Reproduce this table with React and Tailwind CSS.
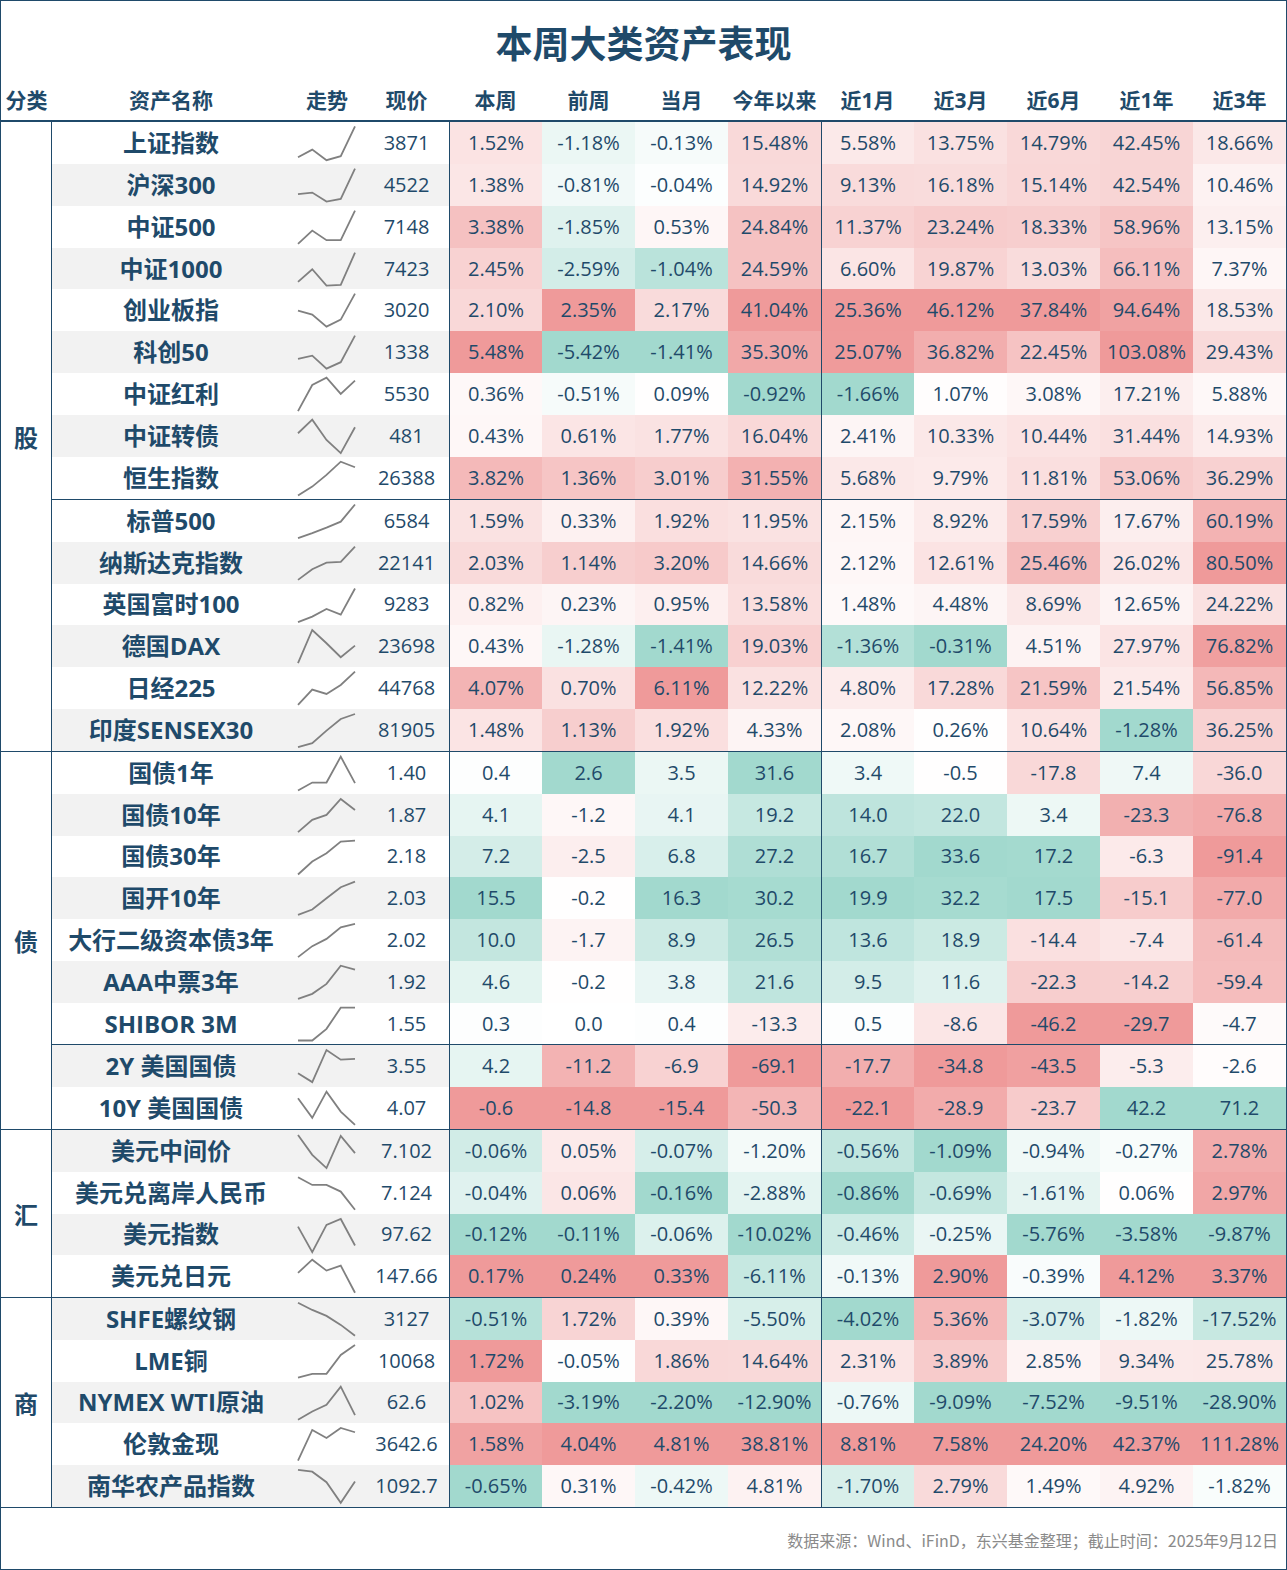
import React from "react";

const NAVY = "#1f4a6a";
const RED = [239, 154, 154];
const GREEN = [162, 217, 206];

const groups = [
  {
    cat: "股",
    invert: false,
    pct: true,
    h: "h-[630px]",
    subs: [
      {
        grow: "flex-[9]",
        first: true,
        rows: [
          ["上证指数", "3871", ["1.52", "-1.18", "-0.13", "15.48", "5.58", "13.75", "14.79", "42.45", "18.66"], [35.3, 27.7, 38.3, 34.3, 4.5], false],
          ["沪深300", "4522", ["1.38", "-0.81", "-0.04", "14.92", "9.13", "16.18", "15.14", "42.54", "10.46"], [30.3, 28.7, 37.7, 35, 4.7], true],
          ["中证500", "7148", ["3.38", "-1.85", "0.53", "24.84", "11.37", "23.24", "18.33", "58.96", "13.15"], [38, 24.7, 34.3, 34.3, 4.7], false],
          ["中证1000", "7423", ["2.45", "-2.59", "-1.04", "24.59", "6.60", "19.87", "13.03", "66.11", "7.37"], [34, 21.3, 37.7, 37, 4.7], true],
          ["创业板指", "3020", ["2.10", "2.35", "2.17", "41.04", "25.36", "46.12", "37.84", "94.64", "18.53"], [21.7, 25.7, 37.7, 30.7, 4.7], false],
          ["科创50", "1338", ["5.48", "-5.42", "-1.41", "35.30", "25.07", "36.82", "22.45", "103.08", "29.43"], [28, 24.7, 37.7, 31.3, 4.7], true],
          ["中证红利", "5530", ["0.36", "-0.51", "0.09", "-0.92", "-1.66", "1.07", "3.08", "17.21", "5.88"], [38.3, 12, 4.7, 21, 7.7], false],
          ["中证转债", "481", ["0.43", "0.61", "1.77", "16.04", "2.41", "10.33", "10.44", "31.44", "14.93"], [18.3, 4.7, 25, 38.3, 12.3], true],
          ["恒生指数", "26388", ["3.82", "1.36", "3.01", "31.55", "5.68", "9.79", "11.81", "53.06", "36.29"], [38.7, 29.7, 18, 4.7, 10.3], false],
        ],
      },
      {
        grow: "flex-[6]",
        first: false,
        rows: [
          ["标普500", "6584", ["1.59", "0.33", "1.92", "11.95", "2.15", "8.92", "17.59", "17.67", "60.19"], [38.3, 33.3, 27.7, 21.7, 4.5], false],
          ["纳斯达克指数", "22141", ["2.03", "1.14", "3.20", "14.66", "2.12", "12.61", "25.46", "26.02", "80.50"], [38, 27.3, 20.7, 20, 4.7], true],
          ["英国富时100", "9283", ["0.82", "0.23", "0.95", "13.58", "1.48", "4.48", "8.69", "12.65", "24.22"], [38.3, 32.7, 25, 30.7, 4.5], false],
          ["德国DAX", "23698", ["0.43", "-1.28", "-1.41", "19.03", "-1.36", "-0.31", "4.51", "27.97", "76.82"], [38.3, 5, 18.3, 32.3, 20.7], true],
          ["日经225", "44768", ["4.07", "0.70", "6.11", "12.22", "4.80", "17.28", "21.59", "21.54", "56.85"], [38, 22.7, 27, 18, 4.7], false],
          ["印度SENSEX30", "81905", ["1.48", "1.13", "1.92", "4.33", "2.08", "0.26", "10.64", "-1.28", "36.25"], [38.3, 34.3, 21.7, 10, 5], true],
        ],
      },
    ],
  },
  {
    cat: "债",
    invert: true,
    pct: false,
    h: "h-[378px]",
    subs: [
      {
        grow: "flex-[7]",
        first: true,
        rows: [
          ["国债1年", "1.40", ["0.4", "2.6", "3.5", "31.6", "3.4", "-0.5", "-17.8", "7.4", "-36.0"], [38.7, 30.7, 30.7, 4.7, 31.3], false],
          ["国债10年", "1.87", ["4.1", "-1.2", "4.1", "19.2", "14.0", "22.0", "3.4", "-23.3", "-76.8"], [38.3, 26, 21, 5, 16], true],
          ["国债30年", "2.18", ["7.2", "-2.5", "6.8", "27.2", "16.7", "33.6", "17.2", "-6.3", "-91.4"], [38.7, 25.7, 17.3, 5.7, 4.7], false],
          ["国开10年", "2.03", ["15.5", "-0.2", "16.3", "30.2", "19.9", "32.2", "17.5", "-15.1", "-77.0"], [38, 32.7, 21.3, 10.3, 4.7], true],
          ["大行二级资本债3年", "2.02", ["10.0", "-1.7", "8.9", "26.5", "13.6", "18.9", "-14.4", "-7.4", "-61.4"], [38.3, 27.3, 20, 8.3, 5], false],
          ["AAA中票3年", "1.92", ["4.6", "-0.2", "3.8", "21.6", "9.5", "11.6", "-22.3", "-14.2", "-59.4"], [38, 33, 23, 4.7, 8.7], true],
          ["SHIBOR 3M", "1.55", ["0.3", "0.0", "0.4", "-13.3", "0.5", "-8.6", "-46.2", "-29.7", "-4.7"], [37.7, 37.7, 26, 4.7, 4.7], false],
        ],
      },
      {
        grow: "flex-[2]",
        first: false,
        rows: [
          ["2Y 美国国债", "3.55", ["4.2", "-11.2", "-6.9", "-69.1", "-17.7", "-34.8", "-43.5", "-5.3", "-2.6"], [28.3, 37.3, 5, 14.7, 14], true],
          ["10Y 美国国债", "4.07", ["-0.6", "-14.8", "-15.4", "-50.3", "-22.1", "-28.9", "-23.7", "42.2", "71.2"], [11.3, 31, 4.7, 24.7, 38], false],
        ],
      },
    ],
  },
  {
    cat: "汇",
    invert: false,
    pct: true,
    h: "h-[168px]",
    subs: [
      {
        grow: "flex-[4]",
        first: true,
        rows: [
          ["美元中间价", "7.102", ["-0.06", "0.05", "-0.07", "-1.20", "-0.56", "-1.09", "-0.94", "-0.27", "2.78"], [5, 25, 38.3, 6, 23.3], true],
          ["美元兑离岸人民币", "7.124", ["-0.04", "0.06", "-0.16", "-2.88", "-0.86", "-0.69", "-1.61", "0.06", "2.97"], [5.3, 13, 13, 19.7, 38], false],
          ["美元指数", "97.62", ["-0.12", "-0.11", "-0.06", "-10.02", "-0.46", "-0.25", "-5.76", "-3.58", "-9.87"], [12.7, 38.3, 11, 5, 31.7], true],
          ["美元兑日元", "147.66", ["0.17", "0.24", "0.33", "-6.11", "-0.13", "2.90", "-0.39", "4.12", "3.37"], [18, 4.7, 15.7, 10.7, 38], false],
        ],
      },
    ],
  },
  {
    cat: "商",
    invert: false,
    pct: true,
    h: "h-[210px]",
    subs: [
      {
        grow: "flex-[5]",
        first: true,
        rows: [
          ["SHFE螺纹钢", "3127", ["-0.51", "1.72", "0.39", "-5.50", "-4.02", "5.36", "-3.07", "-1.82", "-17.52"], [4.7, 12, 18, 27, 38], true],
          ["LME铜", "10068", ["1.72", "-0.05", "1.86", "14.64", "2.31", "3.89", "2.85", "9.34", "25.78"], [37.7, 34, 34, 15, 5], false],
          ["NYMEX WTI原油", "62.6", ["1.02", "-3.19", "-2.20", "-12.90", "-0.76", "-9.09", "-7.52", "-9.51", "-28.90"], [38, 29.7, 23, 4.7, 33.3], true],
          ["伦敦金现", "3642.6", ["1.58", "4.04", "4.81", "38.81", "8.81", "7.58", "24.20", "42.37", "111.28"], [37.7, 7, 15, 5, 9.3], false],
          ["南华农产品指数", "1092.7", ["-0.65", "0.31", "-0.42", "4.81", "-1.70", "2.79", "1.49", "4.92", "-1.82"], [5, 6.7, 17.3, 38, 16.7], true],
        ],
      },
    ],
  },
];

const headers = ["本周", "前周", "当月", "今年以来", "近1月", "近3月", "近6月", "近1年", "近3年"];

function mix(c, t) {
  const r = Math.round(255 + (c[0] - 255) * t);
  const g = Math.round(255 + (c[1] - 255) * t);
  const b = Math.round(255 + (c[2] - 255) * t);
  return `rgb(${r},${g},${b})`;
}

function colorScale(group) {
  const all = group.subs.flatMap((s) => s.rows);
  const maxs = [];
  const mins = [];
  for (let c = 0; c < 9; c++) {
    const vals = all.map((r) => parseFloat(r[2][c]));
    maxs.push(Math.max(0, ...vals));
    mins.push(Math.min(0, ...vals));
  }
  return (v, c) => {
    const x = parseFloat(v);
    if (x > 0 && maxs[c] > 0) {
      return mix(group.invert ? GREEN : RED, x / maxs[c]);
    }
    if (x < 0 && mins[c] < 0) {
      return mix(group.invert ? RED : GREEN, x / mins[c]);
    }
    return "#ffffff";
  };
}

function Spark({ pts }) {
  const xs = [8, 22.25, 36.5, 50.75, 65];
  const p = pts.map((y, i) => `${xs[i]},${y}`).join(" ");
  return (
    <svg viewBox="0 0 74 42" preserveAspectRatio="none" className="w-full h-full block">
      <polyline points={p} fill="none" stroke="#808080" strokeWidth="1.8" vectorEffect="non-scaling-stroke" strokeLinejoin="miter" />
    </svg>
  );
}

function Row({ row, color, pct }) {
  const [name, price, vals, pts, gray] = row;
  const bg = gray ? "bg-[#f2f2f2]" : "bg-white";
  return (
    <div className="flex flex-1 min-h-0">
      <div className={`w-[238px] shrink-0 flex items-center justify-center text-[24px] font-bold whitespace-nowrap ${bg}`}>{name}</div>
      <div className={`w-[74px] shrink-0 ${bg}`}>
        <Spark pts={pts} />
      </div>
      <div className={`w-[85px] shrink-0 flex items-center justify-center text-[20px] ${bg}`}>{price}</div>
      {vals.map((v, i) => (
        <div
          key={i}
          className={`w-[93px] shrink-0 flex items-center justify-center text-[20px] whitespace-nowrap ${i === 0 || i === 4 ? "border-l border-[#1f4a6a]" : ""}`}
          style={{ backgroundColor: color(v, i) }}
        >
          {pct ? `${v}%` : v}
        </div>
      ))}
    </div>
  );
}

export default function App() {
  return (
    <div
      className="w-[1287px] h-[1570px] border border-[#1f4a6a] bg-white flex flex-col text-[#1f4a6a]"
      style={{ fontFamily: '"Open Sans", "Noto Sans CJK SC", sans-serif' }}
    >
      <div className="h-[81px] shrink-0 flex items-center justify-center pt-[2px] text-[37px] font-bold tracking-[0px]" style={{ fontFamily: '"Noto Sans CJK SC", sans-serif' }}>
        本周大类资产表现
      </div>
      <div className="h-[40px] shrink-0 flex border-b-2 border-[#1f4a6a] text-[21px] font-bold">
        <div className="w-[51px] shrink-0 flex items-center justify-center">分类</div>
        <div className="w-[238px] shrink-0 flex items-center justify-center">资产名称</div>
        <div className="w-[74px] shrink-0 flex items-center justify-center">走势</div>
        <div className="w-[85px] shrink-0 flex items-center justify-center">现价</div>
        {headers.map((h) => (
          <div key={h} className="w-[93px] shrink-0 flex items-center justify-center whitespace-nowrap">
            {h}
          </div>
        ))}
      </div>
      {groups.map((g) => {
        const color = colorScale(g);
        return (
          <div key={g.cat} className={`${g.h} shrink-0 flex border-b border-[#1f4a6a]`}>
            <div className="w-[51px] shrink-0 border-r border-[#1f4a6a] flex items-center justify-center text-[24px] font-bold" style={{ fontFamily: '"Noto Sans CJK SC", sans-serif' }}>
              {g.cat}
            </div>
            <div className="flex-1 flex flex-col min-h-0">
              {g.subs.map((s, si) => (
                <div key={si} className={`${s.grow} min-h-0 flex flex-col ${s.first ? "" : "border-t border-[#1f4a6a]"}`}>
                  {s.rows.map((r) => (
                    <Row key={r[0]} row={r} color={color} pct={g.pct} />
                  ))}
                </div>
              ))}
            </div>
          </div>
        );
      })}
      <div className="flex-1 flex items-center justify-end pr-[8px] pt-[2px] text-[16px] text-[#8a8a8a]" style={{ fontFamily: '"Noto Sans CJK SC", sans-serif' }}>
        数据来源：Wind、iFinD，东兴基金整理；截止时间：2025年9月12日
      </div>
    </div>
  );
}
